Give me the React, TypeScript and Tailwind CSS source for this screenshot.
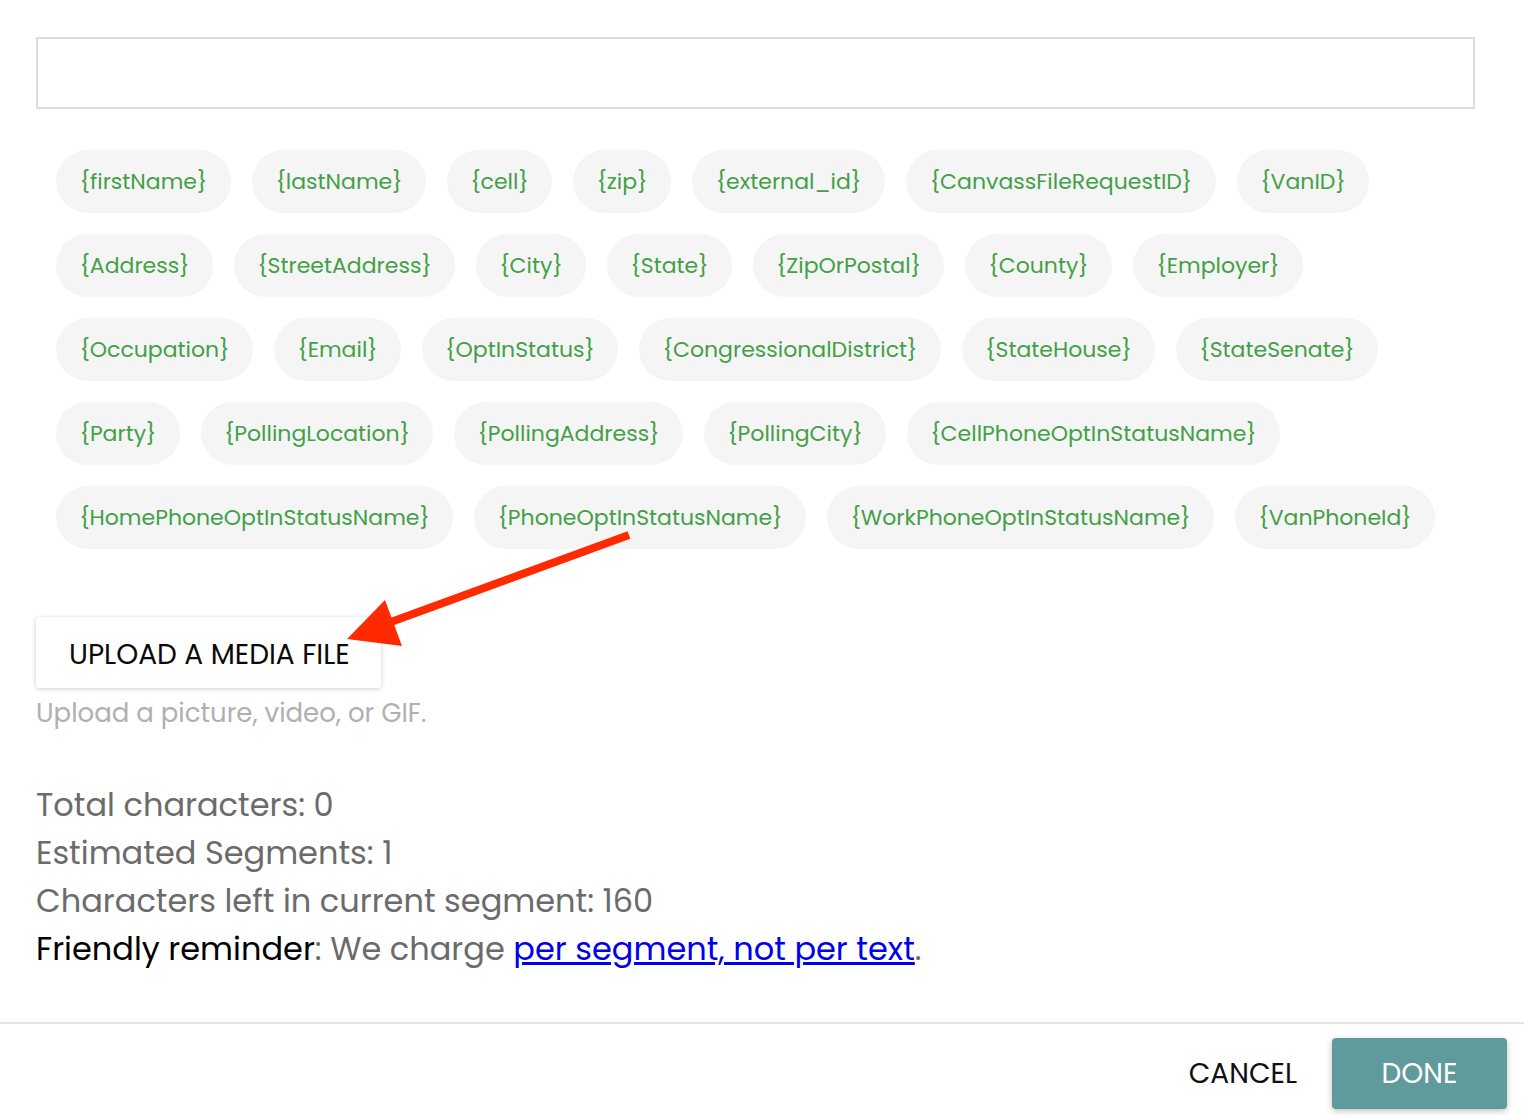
import React from "react";

type Tag = { label: string; w: string };

const TAG_ROWS: Tag[] = [
	{ label: "{firstName}", w: "w-[175px]" },
	{ label: "{lastName}", w: "w-[174px]" },
	{ label: "{cell}", w: "w-[105px]" },
	{ label: "{zip}", w: "w-[98px]" },
	{ label: "{external_id}", w: "w-[193px]" },
	{ label: "{CanvassFileRequestID}", w: "w-[310px]" },
	{ label: "{VanID}", w: "w-[132px]" },
	{ label: "{Address}", w: "w-[157px]" },
	{ label: "{StreetAddress}", w: "w-[221px]" },
	{ label: "{City}", w: "w-[110px]" },
	{ label: "{State}", w: "w-[125px]" },
	{ label: "{ZipOrPostal}", w: "w-[191px]" },
	{ label: "{County}", w: "w-[147px]" },
	{ label: "{Employer}", w: "w-[170px]" },
	{ label: "{Occupation}", w: "w-[197px]" },
	{ label: "{Email}", w: "w-[127px]" },
	{ label: "{OptInStatus}", w: "w-[196px]" },
	{ label: "{CongressionalDistrict}", w: "w-[302px]" },
	{ label: "{StateHouse}", w: "w-[193px]" },
	{ label: "{StateSenate}", w: "w-[202px]" },
	{ label: "{Party}", w: "w-[124px]" },
	{ label: "{PollingLocation}", w: "w-[232px]" },
	{ label: "{PollingAddress}", w: "w-[229px]" },
	{ label: "{PollingCity}", w: "w-[182px]" },
	{ label: "{CellPhoneOptInStatusName}", w: "w-[373px]" },
	{ label: "{HomePhoneOptInStatusName}", w: "w-[397px]" },
	{ label: "{PhoneOptInStatusName}", w: "w-[332px]" },
	{ label: "{WorkPhoneOptInStatusName}", w: "w-[387px]" },
	{ label: "{VanPhoneId}", w: "w-[200px]" },
];

function TagChip({ tag }: { tag: Tag }) {
	return (
		<button
			type="button"
			className={`${tag.w} h-[63px] shrink-0 rounded-full bg-[#f5f5f5] text-[22px] text-[#43a047] flex items-center justify-center whitespace-nowrap`}
		>
			{tag.label}
		</button>
	);
}

// annotation arrow drawn over the page
function RedArrow() {
	return (
		<svg
			className="absolute left-[340px] top-[525px] pointer-events-none"
			width="300"
			height="130"
			viewBox="340 525 300 130"
		>
			<line x1="629" y1="535" x2="380" y2="626" stroke="#ff2a00" strokeWidth="8" />
			<polygon points="347,639 385,600 402,646" fill="#ff2a00" />
		</svg>
	);
}

export default function App() {
	return (
		<div className="relative w-[1524px] h-[1120px] bg-white font-['Poppins','Inter',sans-serif] overflow-hidden">
			<div className="pl-[36px] pr-[49px] pt-[37px]">
				<div className="h-[72px] border-2 border-[#dcdcdc] bg-white" />

				<div className="mt-[41px] px-[20px] flex flex-wrap gap-[21px]">
					{TAG_ROWS.map((tag) => (
						<TagChip key={tag.label} tag={tag} />
					))}
				</div>

				<div className="mt-[68px]">
					<button
						type="button"
						className="w-[345px] h-[71px] bg-white rounded-[3px] shadow-[0_1px_5px_rgba(0,0,0,0.2)] text-[28px] leading-none text-[#0a0a0a] uppercase text-left pl-[33px] pt-[4px]"
					>
						Upload a media file
					</button>
					<p className="mt-[7px] text-[26px] leading-[36px] text-[#b0b0b0]">
						Upload a picture, video, or GIF.
					</p>
				</div>

				<div className="mt-[50px] text-[32px] leading-[48px] text-[#6b6b6b]">
					<p>Total characters: 0</p>
					<p>Estimated Segments: 1</p>
					<p>Characters left in current segment: 160</p>
					<p>
						<span className="text-black">Friendly reminder</span>: We charge{" "}
						<a href="#" className="text-[#0000ee] underline">
							per segment, not per text
						</a>
						.
					</p>
				</div>
			</div>

			<div className="absolute left-0 right-0 top-[1022px] border-t-2 border-[#e4e4e4]" />

			<div className="absolute right-[17px] top-[1038px] flex items-center gap-[20px]">
				<button type="button" className="h-[71px] px-[15px] text-[28px] text-[#111] uppercase">
					Cancel
				</button>
				<button
					type="button"
					className="w-[175px] h-[71px] rounded-[4px] bg-[#5f9a9c] shadow-[0_2px_6px_rgba(0,0,0,0.25)] text-[28px] text-white uppercase"
				>
					Done
				</button>
			</div>

			<RedArrow />
		</div>
	);
}
